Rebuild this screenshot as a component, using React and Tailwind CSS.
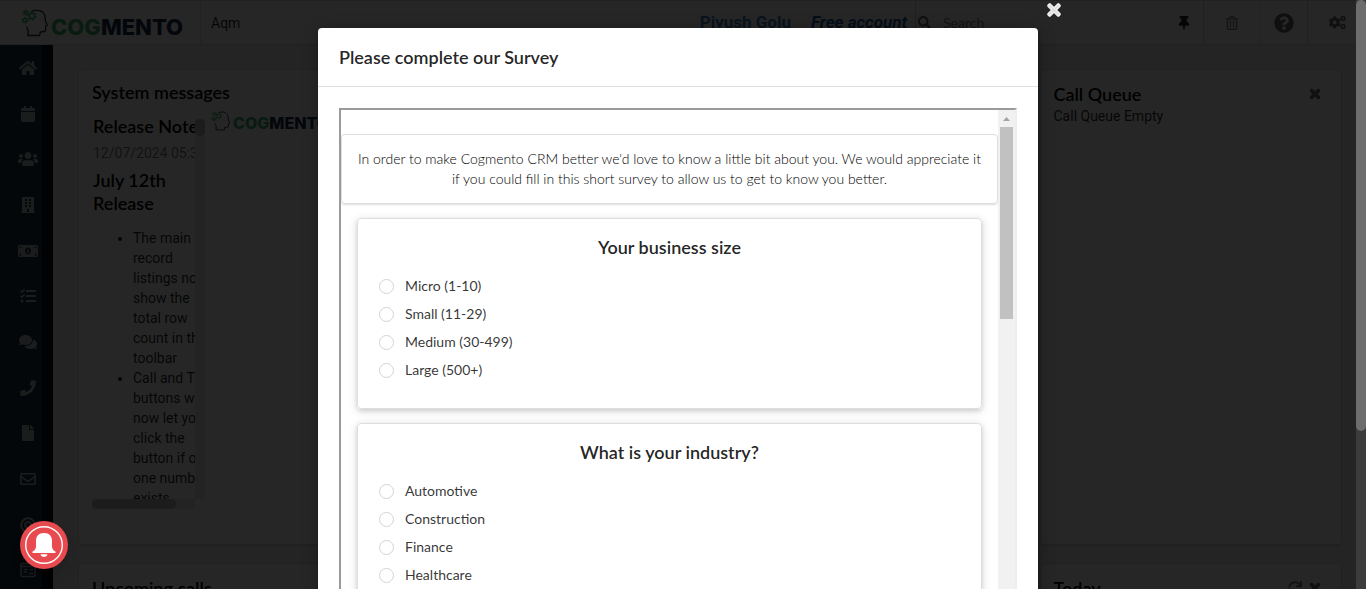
import {
  FaHome, FaCalendar, FaUsers, FaBuilding, FaMoneyBillAlt, FaTasks, FaComments, FaPhone, FaFile,
  FaRegEnvelope, FaBullseye, FaTimes, FaThumbtack, FaRegTrashAlt, FaQuestionCircle,
  FaCogs, FaSearch, FaSync,
} from "react-icons/fa";

function FormIcon({ size }) {
  return (
    <svg viewBox="0 0 16 16" width={size} height={size} aria-hidden="true" fill="none" stroke="currentColor" strokeWidth="1.500">
      <rect x="1" y="1.500" width="14" height="13" rx="1" />
      <path d="M1 4.500H15M3.500 7.500H8M3.500 10H7M10 7.500H13M9 11.500H13" />
    </svg>
  );
}

const navItems = [
  ["Home", FaHome, 18],
  ["Calendar", FaCalendar, 16],
  ["Contacts", FaUsers, 20],
  ["Companies", FaBuilding, 16],
  ["Deals", FaMoneyBillAlt, 20],
  ["Tasks", FaTasks, 16],
  ["Cases", FaComments, 18],
  ["Calls", FaPhone, 16],
  ["Documents", FaFile, 16],
  ["Email", FaRegEnvelope, 16],
  ["Campaigns", FaBullseye, 16],
  ["Forms", FormIcon, 16],
];

const questions = [
  { title: "Your business size", name: "size", options: ["Micro (1-10)", "Small (11-29)", "Medium (30-499)", "Large (500+)"] },
  { title: "What is your industry?", name: "industry", options: ["Automotive", "Construction", "Finance", "Healthcare"] },
];

function Gear({ cx, cy, r }) {
  return (
    <g fill="none" stroke="#3cb56e">
      <circle cx={cx} cy={cy} r={r} strokeWidth="1.4" />
      <circle cx={cx} cy={cy} r={r + 1.1} strokeWidth="1.4" strokeDasharray={`${(r + 1.1) * 0.5236} ${(r + 1.1) * 0.5236}`} />
    </g>
  );
}

function Logo({ small }) {
  return (
    <span className="flex items-end gap-0.5">
      <svg viewBox="0 0 27 28" className={small ? "h-5 w-5 shrink-0" : "h-7 w-7 shrink-0"} aria-hidden="true">
        <path
          d="M10 2.6C15 .2 21.500 1.200 23.300 6.500C24 9 23.400 11 24.300 13L25.800 16.200L24.100 17.200L24 21.500C23.700 23 21.500 22.800 18.800 22.800L18.200 26.500H6.300C7.500 22.500 6.500 20 4.800 17.500"
          fill="none" stroke="#1b2f4b" strokeWidth="1.300" strokeLinejoin="round"
        />
        <Gear cx={10.500} cy={7} r={2.700} />
        <Gear cx={4.300} cy={3.800} r={1.500} />
        <Gear cx={3.600} cy={11.300} r={1.700} />
      </svg>
      <span className={small ? "font-['Inter',sans-serif] text-base leading-4 font-extrabold text-[#15294a]" : "font-['Inter',sans-serif] text-[22px] leading-5 font-extrabold text-[#15294a]"}>
        <span className="text-[#3cb56e]">COG</span>MENTO
      </span>
    </span>
  );
}

function Header() {
  return (
    <header className="flex h-[45px] shrink-0 items-stretch border-y border-[#dcdcdc] bg-white font-['Roboto',sans-serif] text-sm text-black/85">
      <a href="#home" className="flex w-[201px] shrink-0 items-center border-r border-[#e0e0e0] pl-[21px]"><Logo /></a>
      <span className="flex flex-1 items-center pl-2.5">Aqm</span>
      <div className="flex items-center gap-5 pr-2 text-[17px] font-bold text-[#4183c4]">
        <a href="#user">Piyush Golu</a>
        <a href="#account" className="text-[#1e5fa8] italic">Free account</a>
      </div>
      <label className="flex w-[242px] items-center gap-3 border-l border-[#cfcfcf] pl-0.5">
        <FaSearch size={13} className="text-black/60" />
        <span className="sr-only">Search</span>
        <input placeholder="Search" className="w-40 font-['Lato',sans-serif] text-sm outline-none placeholder:text-black/50" />
      </label>
      <button aria-label="Pin" className="flex w-[47px] items-center justify-center border-r border-[#cfcfcf] pl-2"><FaThumbtack size={14} /></button>
      <button aria-label="Trash" className="flex w-[56px] items-center justify-center border-r border-[#e0e0e0] text-black/50"><FaRegTrashAlt size={14} /></button>
      <button aria-label="Help" className="flex w-[48px] items-center justify-center border-r border-[#cfcfcf] text-black/60"><FaQuestionCircle size={20} /></button>
      <button aria-label="Settings" className="flex w-[58px] items-center justify-center text-black/60"><FaCogs size={17} /></button>
    </header>
  );
}

function Sidebar() {
  return (
    <nav className="flex w-[53px] shrink-0 bg-[#0c1218]">
      <ul className="flex h-[548px] w-[42px] flex-col bg-[#1b2f40]">
        {navItems.map(([label, Icon, size]) => (
          <li key={label} className="flex-1">
            <a href={`#${label}`} aria-label={label} className="flex h-full items-center justify-center pl-3.5 text-[#b4b8bc]">
              <Icon size={size} className="shrink-0" />
            </a>
          </li>
        ))}
      </ul>
    </nav>
  );
}

const card = "overflow-hidden rounded border border-[#dcdcdc] bg-white px-[13px] shadow-sm";
const heading = "font-['Lato',sans-serif] text-lg font-semibold text-black";

function Dashboard() {
  return (
    <main className="grid flex-1 auto-rows-[476px] grid-cols-4 gap-[18px] pt-6 pr-3.5 pl-[25px]">
      <section className={card}>
        <h2 className={`${heading} pt-2 leading-7`}>System messages</h2>
        <div className="flex items-start gap-1.5">
          <div className="mt-[13px] w-[113px] shrink-0">
            <div className="flex h-[380px]">
              <div className="w-[103px] overflow-hidden pl-px font-['Roboto',sans-serif] text-sm leading-5 text-black/85">
                <div className="w-[126px]">
                  <h3 className={`${heading} -mt-1.5 leading-[26px] whitespace-nowrap`}>Release Notes</h3>
                  <p className="pt-1 whitespace-nowrap text-black/55">12/07/2024 05:30</p>
                  <h3 className={`${heading} pt-1.5 leading-[23px]`}>July 12th Release</h3>
                  <ul className="list-disc pt-[13px] pl-10">
                    <li>The main record listings now show the total row count in the toolbar</li>
                    <li>Call and Text buttons will now let you click the button if only one number exists</li>
                  </ul>
                </div>
              </div>
              <div className="w-2.5 bg-[#e6e6e6]"><div className="h-[17px] rounded-md bg-[#b8b8b8]" /></div>
            </div>
            <div className="mr-2.5 h-2.5 bg-[#e6e6e6]"><div className="h-2.5 w-[84px] rounded-md bg-[#b8b8b8]" /></div>
          </div>
          <div className="pt-[5px]"><Logo small /></div>
        </div>
      </section>
      <section className={card} />
      <section className={card} />
      <section className={card}>
        <div className="flex items-center justify-between pt-2.5 pr-1.5">
          <h2 className={`${heading} leading-7`}>Call Queue</h2>
          <button aria-label="Close call queue" className="text-black/50"><FaTimes size={14} strokeWidth={40} stroke="currentColor" /></button>
        </div>
        <p className="-mt-0.5 font-['Roboto',sans-serif] text-sm text-black/85">Call Queue Empty</p>
      </section>
      <section className={card}><h2 className={`${heading} pt-2.5 leading-7`}>Upcoming calls</h2></section>
      <section className={card} />
      <section className={card} />
      <section className={card}>
        <div className="flex items-center pt-2.5 pr-1.5">
          <h2 className={`${heading} flex-1 leading-7`}>Today</h2>
          <button aria-label="Refresh" className="mr-1.5 text-black/50"><FaSync size={14} /></button>
          <button aria-label="Close today" className="text-black/50"><FaTimes size={14} strokeWidth={40} stroke="currentColor" /></button>
        </div>
      </section>
    </main>
  );
}

function Question({ title, name, options }) {
  return (
    <fieldset className="mx-4 mt-3.5 rounded border border-[#dededf] bg-white px-[21px] pt-3.5 pb-6 shadow-[0_2px_4px_rgba(34,36,38,0.12),0_2px_10px_rgba(34,36,38,0.15)]">
      <legend className="float-left w-full pb-[11px] text-center text-lg leading-7 font-semibold text-black/87">{title}</legend>
      <div className="clear-both flex flex-col">
        {options.map((option) => (
          <label key={option} className="flex h-7 items-center gap-[11px] font-normal text-black/80">
            <input type="radio" name={name} className="size-[15px] shrink-0 appearance-none rounded-full border border-[#d4d4d5] bg-white checked:border-[5px]" />
            {option}
          </label>
        ))}
      </div>
    </fieldset>
  );
}

function SurveyModal() {
  return (
    <div role="dialog" aria-modal="true" aria-labelledby="survey-title" className="relative mx-auto mt-7 w-full max-w-[720px] self-start rounded-t bg-white font-['Lato',sans-serif] text-sm text-black/87 shadow-[1px_3px_3px_rgba(0,0,0,0.2),1px_3px_15px_2px_rgba(0,0,0,0.2)]">
      <button aria-label="Close" className="absolute -top-[27px] -right-[25px] text-white/85"><FaTimes size={18} strokeWidth={40} stroke="currentColor" /></button>
      <h1 id="survey-title" className="border-b border-[#dededf] px-[21px] py-[15px] text-lg leading-7 font-semibold">Please complete our Survey</h1>
      <div className="p-[21px]">
        <div className="flex h-[600px] border-2 border-t-[#9a9a9a] border-r-[#eeeeee] border-b-[#eeeeee] border-l-[#9a9a9a] font-light text-black">
          <div className="flex-1 overflow-hidden pt-6">
            <p className="rounded border border-[#dededf] px-3.5 py-3.5 text-center leading-5 shadow-[0_1px_2px_rgba(34,36,38,0.15)]">
              In order to make Cogmento CRM better we'd love to know a little bit about you. We would appreciate it if you could fill in this short survey to allow us to get to know you better.
            </p>
            {questions.map((q) => <Question key={q.name} {...q} />)}
          </div>
          <div className="flex w-[17px] flex-col items-center bg-[#f1f1f1]">
            <svg viewBox="0 0 17 17" className="h-[17px] w-[17px]" aria-hidden="true"><path d="M5 11L8.500 7L12 11Z" fill="#a3a3a3" /></svg>
            <div className="h-48 w-[13px] bg-[#c1c1c1]" />
          </div>
        </div>
      </div>
    </div>
  );
}

export default function App() {
  return (
    <div className="relative h-screen overflow-hidden">
      <div className="flex h-full flex-col bg-[#f2f2f2]">
        <Header />
        <div className="flex min-h-0 flex-1 pr-2.5">
          <Sidebar />
          <Dashboard />
        </div>
      </div>
      <div className="absolute inset-0 flex overflow-hidden bg-black/85">
        <div className="flex flex-1"><SurveyModal /></div>
        <div className="w-2.5 bg-[#3c3c3c]"><div className="h-[431px] rounded-md bg-[#6d6d6d]" /></div>
      </div>
      <button aria-label="Notifications" className="absolute bottom-5 left-5 rounded-full bg-[#e84a4f] shadow-lg">
        <svg viewBox="0 0 48 48" className="size-12" aria-hidden="true">
          <circle cx="24" cy="24" r="18.300" fill="none" stroke="#fff" strokeWidth="1.400" />
          <path d="M24 12C18.500 12 16 15.500 16 20V25C16 28 15 29 12.500 30.500V32H35.500V30.500C33 29 32 28 32 25V20C32 15.500 29.500 12 24 12Z" fill="#fff" />
          <path d="M20.500 33.200H27.500C27 35 25.800 36 24 36S21 35 20.500 33.200Z" fill="#fff" />
        </svg>
      </button>
    </div>
  );
}
